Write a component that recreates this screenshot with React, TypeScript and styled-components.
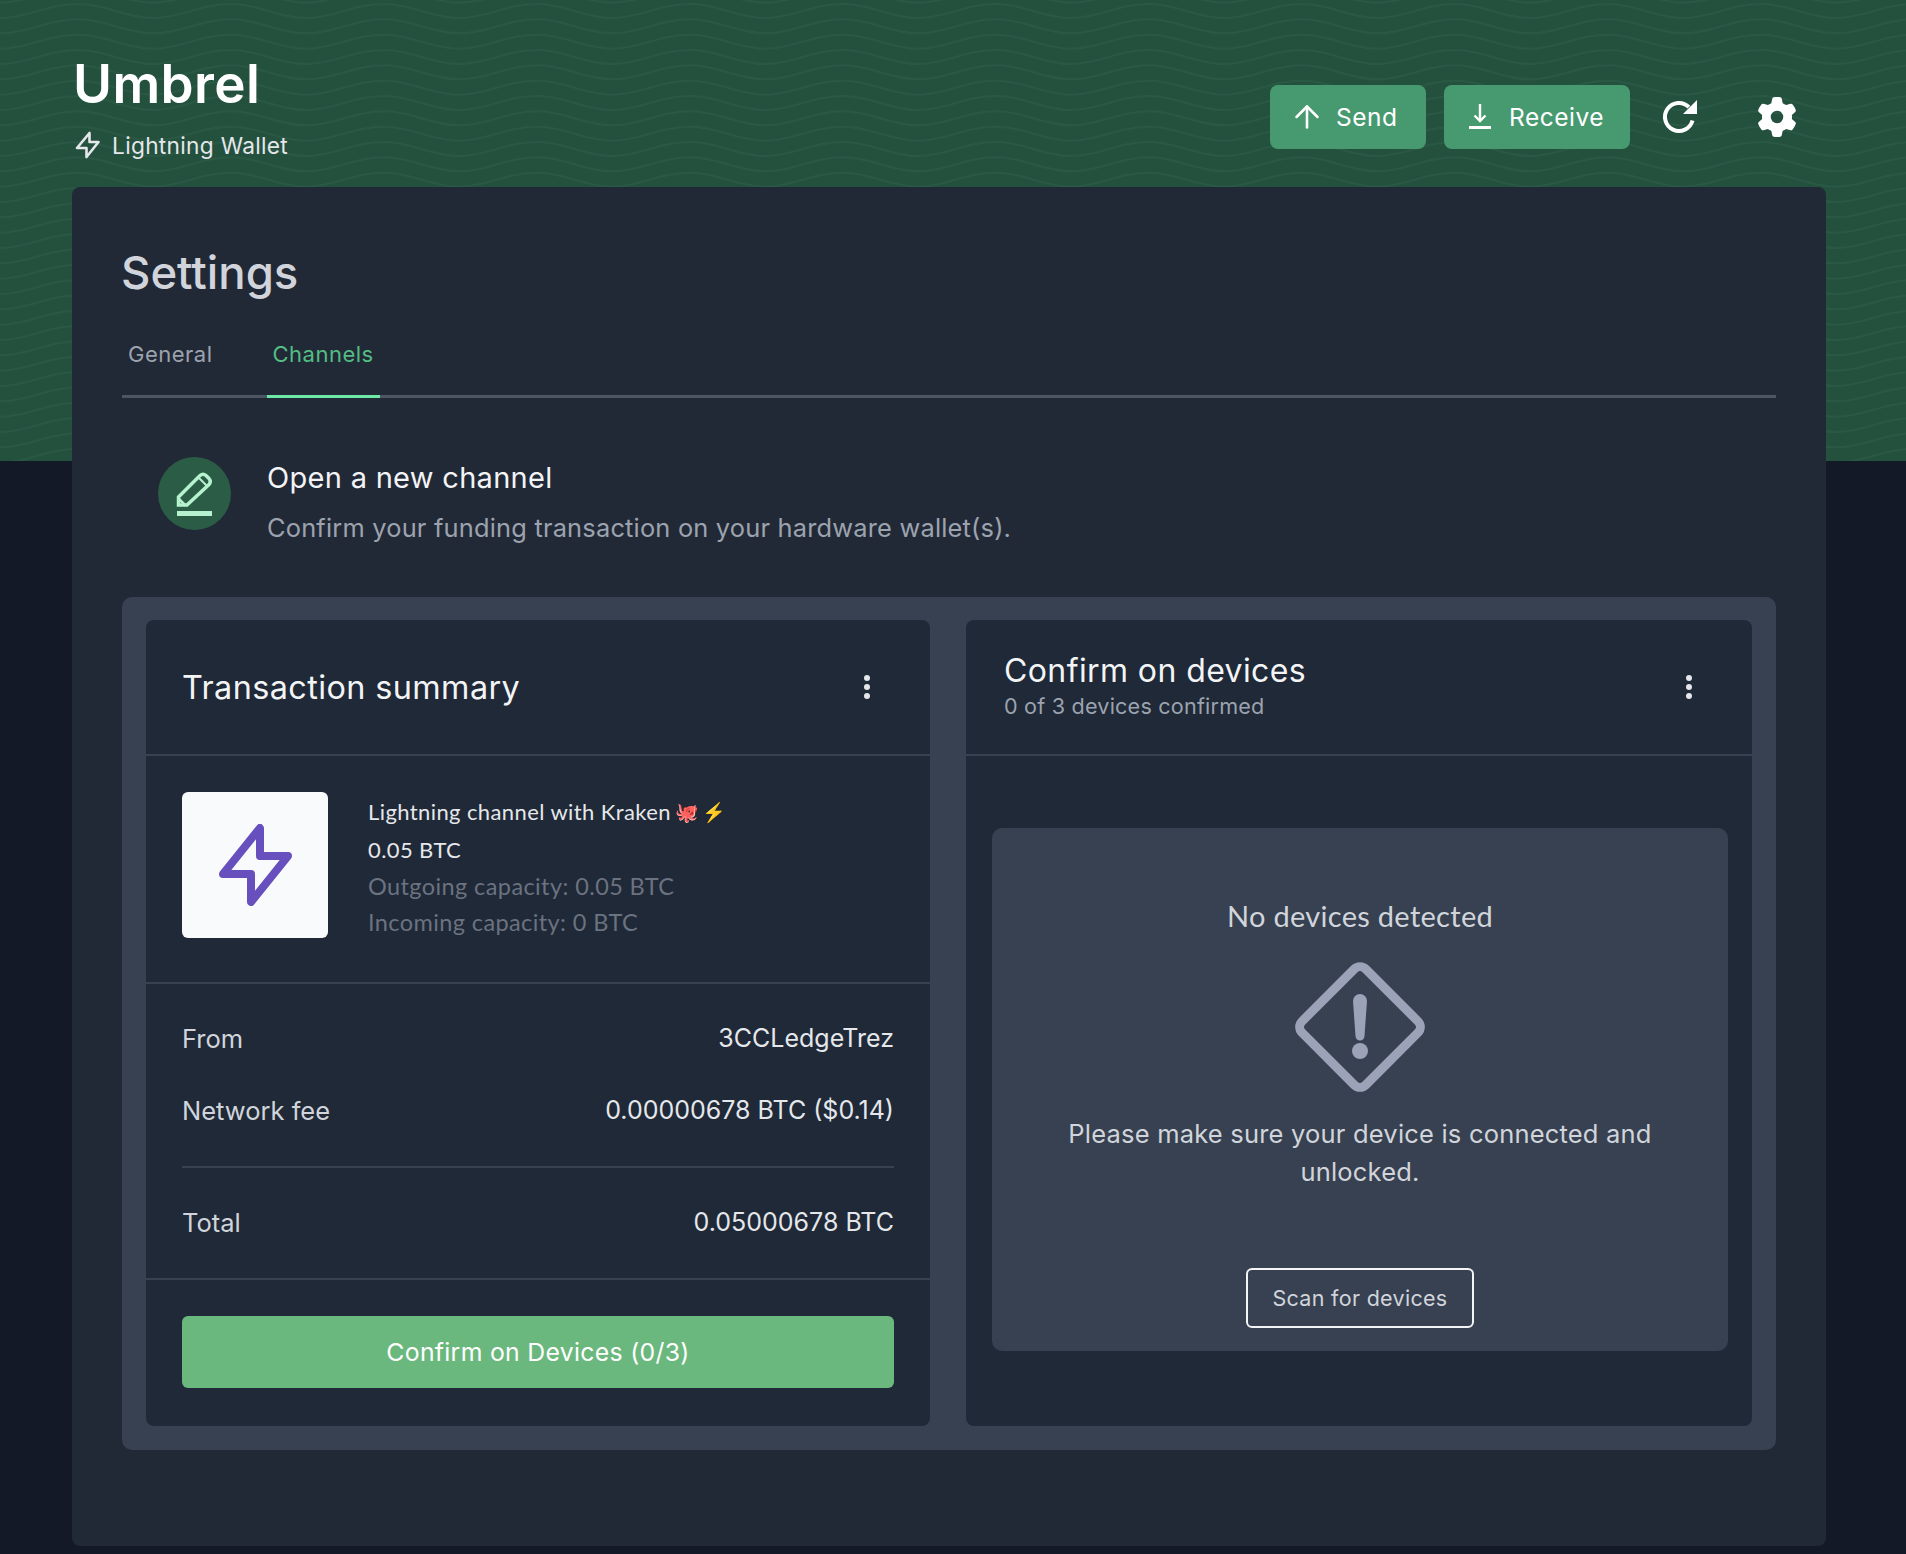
import React from 'react';
import styled, { createGlobalStyle } from 'styled-components';
import { ArrowUp } from 'lucide-react';
import { FaGear } from 'react-icons/fa6';

// three wave lines in a 153x46 tile, plus one above and one below so they wrap
const waveLines = [-1, 0, 1, 2, 3]
  .map(k => {
    const y = 4 + k * (46 / 3);
    return `<path d="M0 ${y + 14} C 30 ${y + 14} 45 ${y} 80 ${y} C 105 ${y} 125 ${y + 14} 153 ${y + 14}"/>`;
  })
  .join('');

const waves = encodeURIComponent(
  `<svg xmlns="http://www.w3.org/2000/svg" width="153" height="46"><g fill="none" stroke="#295845" stroke-width="2">${waveLines}</g></svg>`
);

const GlobalStyle = createGlobalStyle`
  html, body {
    margin: 0;
    padding: 0;
    background: #131927;
    font-family: 'Inter', 'Liberation Sans', sans-serif;
  }
  * { box-sizing: border-box; }
`;

const Page = styled.div`
  width: 1906px;
  height: 1554px;
  overflow: hidden;
`;

const Banner = styled.header`
  height: 461px;
  padding: 0 72px;
  background-color: #24503e;
  background-image: url("data:image/svg+xml,${waves}");
`;

const BannerRow = styled.div`
  height: 187px;
  display: flex;
  justify-content: space-between;
  align-items: flex-start;
`;

const Brand = styled.div`
  padding-top: 52px;
  padding-left: 1px;
`;

const BrandName = styled.h1`
  margin: 0;
  height: 64px;
  line-height: 64px;
  font-size: 53px;
  font-weight: 600;
  letter-spacing: 0.4px;
  color: #ffffff;
`;

const BrandSub = styled.div`
  display: flex;
  align-items: center;
  gap: 11px;
  margin-top: 14px;
  padding-left: 2px;
  height: 30px;
  font-size: 22.700px;
  letter-spacing: 0.3px;
  color: #e5e7eb;
`;

const Actions = styled.div`
  display: flex;
  align-items: center;
  padding-top: 85px;
  padding-right: 8px;
`;

const ActionGroup = styled.div`
  display: flex;
  gap: 18px;
`;

const ActionButton = styled.button<{ $width: number; $pad: number }>`
  display: flex;
  align-items: center;
  gap: 11px;
  width: ${p => p.$width}px;
  height: 64px;
  padding: 0 0 0 ${p => p.$pad}px;
  border: none;
  border-radius: 8px;
  background: #479a6f;
  color: #ffffff;
  font-family: inherit;
  font-size: 24.500px;
  letter-spacing: 0.5px;
`;

const IconButton = styled.div`
  display: flex;
  align-items: center;
  justify-content: center;
  width: 98px;
  height: 64px;
  color: #ffffff;
`;

const Panel = styled.main`
  height: 1359px;
  margin: -274px 80px 0 72px;
  padding: 0 50px;
  background: #222936;
  border-radius: 8px;
`;

const PageTitle = styled.h2`
  margin: 0 0 0 -1px;
  padding-top: 56px;
  height: 116px;
  line-height: 60px;
  font-size: 45.500px;
  font-weight: 500;
  color: #d1d5db;
`;

const Tabs = styled.nav`
  display: flex;
  height: 64px;
  margin-top: 31px;
  border-bottom: 3px solid #4b5563;
`;

const Tab = styled.div<{ $active?: boolean }>`
  height: 64px;
  padding: 0 6px;
  margin-right: ${p => (p.$active ? '0' : '48px')};
  line-height: 40px;
  font-size: 22px;
  letter-spacing: 0.5px;
  color: ${p => (p.$active ? '#52bd84' : '#9ca3af')};
  border-bottom: 3px solid ${p => (p.$active ? '#6ee7a7' : 'transparent')};
`;

const Intro = styled.section`
  display: flex;
  align-items: flex-start;
  gap: 36px;
  height: 199px;
  padding: 59px 0 0 36px;
`;

const IntroIcon = styled.div`
  flex: none;
  display: flex;
  align-items: center;
  justify-content: center;
  width: 73px;
  height: 73px;
  border-radius: 50%;
  background: #2b5d46;
`;

const IntroText = styled.div`
  padding-top: 0;
`;

const IntroTitle = styled.div`
  height: 42px;
  line-height: 42px;
  font-size: 29px;
  letter-spacing: 0.3px;
  color: #f3f4f6;
`;

const IntroSub = styled.div`
  margin-top: 11px;
  height: 36px;
  line-height: 36px;
  font-size: 25.400px;
  letter-spacing: 0.2px;
  color: #9ca3af;
`;

const Tray = styled.section`
  display: grid;
  grid-template-columns: 784px 786px;
  gap: 36px;
  height: 853px;
  padding: 23px 24px 24px;
  background: #374151;
  border-radius: 10px;
`;

const Card = styled.article`
  display: flex;
  flex-direction: column;
  background: #1f2937;
  border-radius: 8px;
`;

const CardHeader = styled.header`
  flex: none;
  display: flex;
  align-items: center;
  justify-content: space-between;
  height: 136px;
  padding: 0 60px 0 36px;
  border-bottom: 2px solid #374151;
`;

const CardTitle = styled.h3`
  margin: 0;
  font-size: 32.400px;
  font-weight: 400;
  letter-spacing: 0.4px;
  color: #f3f4f6;
`;

const CardTitleCompact = styled(CardTitle)`
  margin-top: -4px;
  margin-left: 2px;
  line-height: 40px;
  font-size: 32px;
`;

const CardSub = styled.div`
  margin-top: 2px;
  margin-left: 2px;
  font-size: 21.600px;
  letter-spacing: 0.2px;
  color: #9ca3af;
`;

const Dots = styled.div`
  display: flex;
  flex-direction: column;
  gap: 3px;
  span {
    width: 6px;
    height: 6px;
    border-radius: 50%;
    background: #e5e7eb;
  }
`;

const Product = styled.div`
  flex: none;
  display: flex;
  align-items: flex-start;
  gap: 40px;
  height: 228px;
  padding: 36px 36px 0;
  border-bottom: 2px solid #374151;
`;

const ProductImage = styled.div`
  flex: none;
  display: flex;
  align-items: center;
  justify-content: center;
  width: 146px;
  height: 146px;
  background: #f9fafb;
  border-radius: 6px;
`;

const ProductText = styled.div`
  padding-top: 2px;
`;

const ProductLine = styled.div`
  display: flex;
  align-items: center;
  gap: 4px;
  height: 36px;
  line-height: 36px;
  font-family: 'Lato', sans-serif;
  font-size: 22px;
  color: #e5e7eb;
  letter-spacing: 0.4px;
  &:first-child {
    margin-bottom: 2px;
  }
`;

const ProductMuted = styled(ProductLine)`
  font-size: 23.500px;
  color: #6b7280;
`;

const Emoji = styled.span`
  font-size: 19px;
  letter-spacing: -1px;
  word-spacing: 0;
`;

const Summary = styled.div`
  flex: none;
  height: 184px;
  margin: 0 36px;
  padding-top: 18px;
  border-bottom: 2px solid #374151;
`;

const Row = styled.div`
  display: flex;
  align-items: center;
  justify-content: space-between;
  height: 72px;
  font-size: 25.500px;
  color: #d1d5db;
`;

const RowValue = styled.span`
  font-size: 25px;
  color: #e5e7eb;
`;

const TotalRow = styled(Row)`
  flex: none;
  height: 110px;
  margin: 0 36px;
  padding-bottom: 2px;
`;

const CardFooter = styled.div`
  flex: none;
  padding: 36px 36px 0;
  border-top: 2px solid #374151;
`;

const ConfirmButton = styled.button`
  display: block;
  width: 100%;
  height: 72px;
  border: none;
  border-radius: 6px;
  background: #6bb87e;
  color: #ffffff;
  font-family: inherit;
  font-size: 24.800px;
  letter-spacing: 0.3px;
`;

const DeviceBox = styled.div`
  display: flex;
  flex-direction: column;
  align-items: center;
  height: 523px;
  margin: 72px 24px 0 26px;
  padding-top: 68px;
  background: #374151;
  border-radius: 10px;
`;

const DeviceTitle = styled.div`
  height: 40px;
  line-height: 40px;
  font-family: 'Lato', sans-serif;
  font-size: 29px;
  letter-spacing: 0.3px;
  color: #d1d5db;
`;

const DeviceIcon = styled.div`
  display: flex;
  margin-top: 26px;
  height: 130px;
`;

const DeviceText = styled.p`
  width: 620px;
  margin: 23px 0 0;
  line-height: 38px;
  text-align: center;
  font-size: 25.500px;
  letter-spacing: 0.2px;
  color: #d1d5db;
`;

const ScanButton = styled.button`
  width: 228px;
  height: 60px;
  margin-top: 77px;
  background: transparent;
  border: 2px solid #f3f4f6;
  border-radius: 6px;
  color: #d1d5db;
  font-family: inherit;
  font-size: 21.500px;
  letter-spacing: 0.3px;
`;

const SmallBolt = () => (
  <svg width="26" height="28" viewBox="0 0 26 28" fill="none" stroke="#e5e7eb" strokeWidth="2.6" strokeLinejoin="round">
    <polygon points="14.5,2 14.5,11 23.5,11 11.5,26 11.5,17 2,17" />
  </svg>
);

const ReceiveIcon = () => (
  <svg width="36" height="28" viewBox="0 0 36 28" fill="none" stroke="#fff" strokeWidth="2.4">
    <path d="M18 1v17M12.500 12.500L18 18l5.500-5.500" />
    <path d="M7 24.500h22" strokeWidth="3" />
  </svg>
);

const RefreshIcon = () => (
  <svg width="38" height="38" viewBox="0 0 38 38" fill="none">
    <path d="M28.900 9.100A14 14 0 1 0 32.500 22.600" stroke="#fff" strokeWidth="4" />
    <polygon points="37,2 37,16 23,16" fill="#fff" />
  </svg>
);

const PencilIcon = () => (
  <svg width="38" height="46" viewBox="0 0 38 46" fill="none" stroke="#b6f2cf" strokeWidth="3.500">
    <path d="M2.500 26L24 4.500q3-2.500 6 0l3 3q2.500 3 0 6L11 34H2.500z" />
    <path d="M23 7l9 9" strokeWidth="2" />
    <path d="M2.500 27.500l7 7" strokeWidth="2.500" />
    <path d="M1 42.500h35" strokeWidth="5" />
  </svg>
);

const ChannelBolt = () => (
  <svg width="73" height="82" viewBox="0 0 73 82" fill="none" stroke="#6750bd" strokeWidth="8" strokeLinejoin="round" strokeLinecap="round">
    <polygon points="41,4 41,32 69,32 32,78 32,50 4,50" />
  </svg>
);

const WarningIcon = () => (
  <svg width="130" height="130" viewBox="0 0 130 130">
    <rect x="20" y="20" width="90" height="90" rx="8" transform="rotate(45 65 65)" fill="none" stroke="#9ca3b8" strokeWidth="9" />
    <path d="M58 39a7 7 0 0 1 14 0l-2.500 35a4.500 4.500 0 0 1-9 0z" fill="#9ca3b8" />
    <circle cx="65" cy="89" r="8" fill="#9ca3b8" />
  </svg>
);

const MenuDots = () => (
  <Dots>
    <span />
    <span />
    <span />
  </Dots>
);

const App: React.FC = () => {
  return (
    <Page>
      <GlobalStyle />
      <Banner>
        <BannerRow>
          <Brand>
            <BrandName>Umbrel</BrandName>
            <BrandSub>
              <SmallBolt />
              Lightning Wallet
            </BrandSub>
          </Brand>
          <Actions>
            <ActionGroup>
              <ActionButton $width={156} $pad={19}>
                <ArrowUp size={36} strokeWidth={1.7} />
                Send
              </ActionButton>
              <ActionButton $width={186} $pad={18}>
                <ReceiveIcon />
                Receive
              </ActionButton>
            </ActionGroup>
            <IconButton>
              <RefreshIcon />
            </IconButton>
            <IconButton>
              <FaGear size={40} />
            </IconButton>
          </Actions>
        </BannerRow>
      </Banner>
      <Panel>
        <PageTitle>Settings</PageTitle>
        <Tabs>
          <Tab>General</Tab>
          <Tab $active>Channels</Tab>
        </Tabs>
        <Intro>
          <IntroIcon>
            <PencilIcon />
          </IntroIcon>
          <IntroText>
            <IntroTitle>Open a new channel</IntroTitle>
            <IntroSub>Confirm your funding transaction on your hardware wallet(s).</IntroSub>
          </IntroText>
        </Intro>
        <Tray>
          <Card>
            <CardHeader>
              <CardTitle>Transaction summary</CardTitle>
              <MenuDots />
            </CardHeader>
            <Product>
              <ProductImage>
                <ChannelBolt />
              </ProductImage>
              <ProductText>
                <ProductLine>
                  Lightning channel with Kraken <Emoji>🐙 ⚡</Emoji>
                </ProductLine>
                <ProductLine>0.05 BTC</ProductLine>
                <ProductMuted>Outgoing capacity: 0.05 BTC</ProductMuted>
                <ProductMuted>Incoming capacity: 0 BTC</ProductMuted>
              </ProductText>
            </Product>
            <Summary>
              <Row>
                From
                <RowValue>3CCLedgeTrez</RowValue>
              </Row>
              <Row>
                Network fee
                <RowValue>0.00000678 BTC ($0.14)</RowValue>
              </Row>
            </Summary>
            <TotalRow>
              Total
              <RowValue>0.05000678 BTC</RowValue>
            </TotalRow>
            <CardFooter>
              <ConfirmButton>Confirm on Devices (0/3)</ConfirmButton>
            </CardFooter>
          </Card>
          <Card>
            <CardHeader>
              <div>
                <CardTitleCompact>Confirm on devices</CardTitleCompact>
                <CardSub>0 of 3 devices confirmed</CardSub>
              </div>
              <MenuDots />
            </CardHeader>
            <DeviceBox>
              <DeviceTitle>No devices detected</DeviceTitle>
              <DeviceIcon>
                <WarningIcon />
              </DeviceIcon>
              <DeviceText>Please make sure your device is connected and unlocked.</DeviceText>
              <ScanButton>Scan for devices</ScanButton>
            </DeviceBox>
          </Card>
        </Tray>
      </Panel>
    </Page>
  );
};

export default App;
